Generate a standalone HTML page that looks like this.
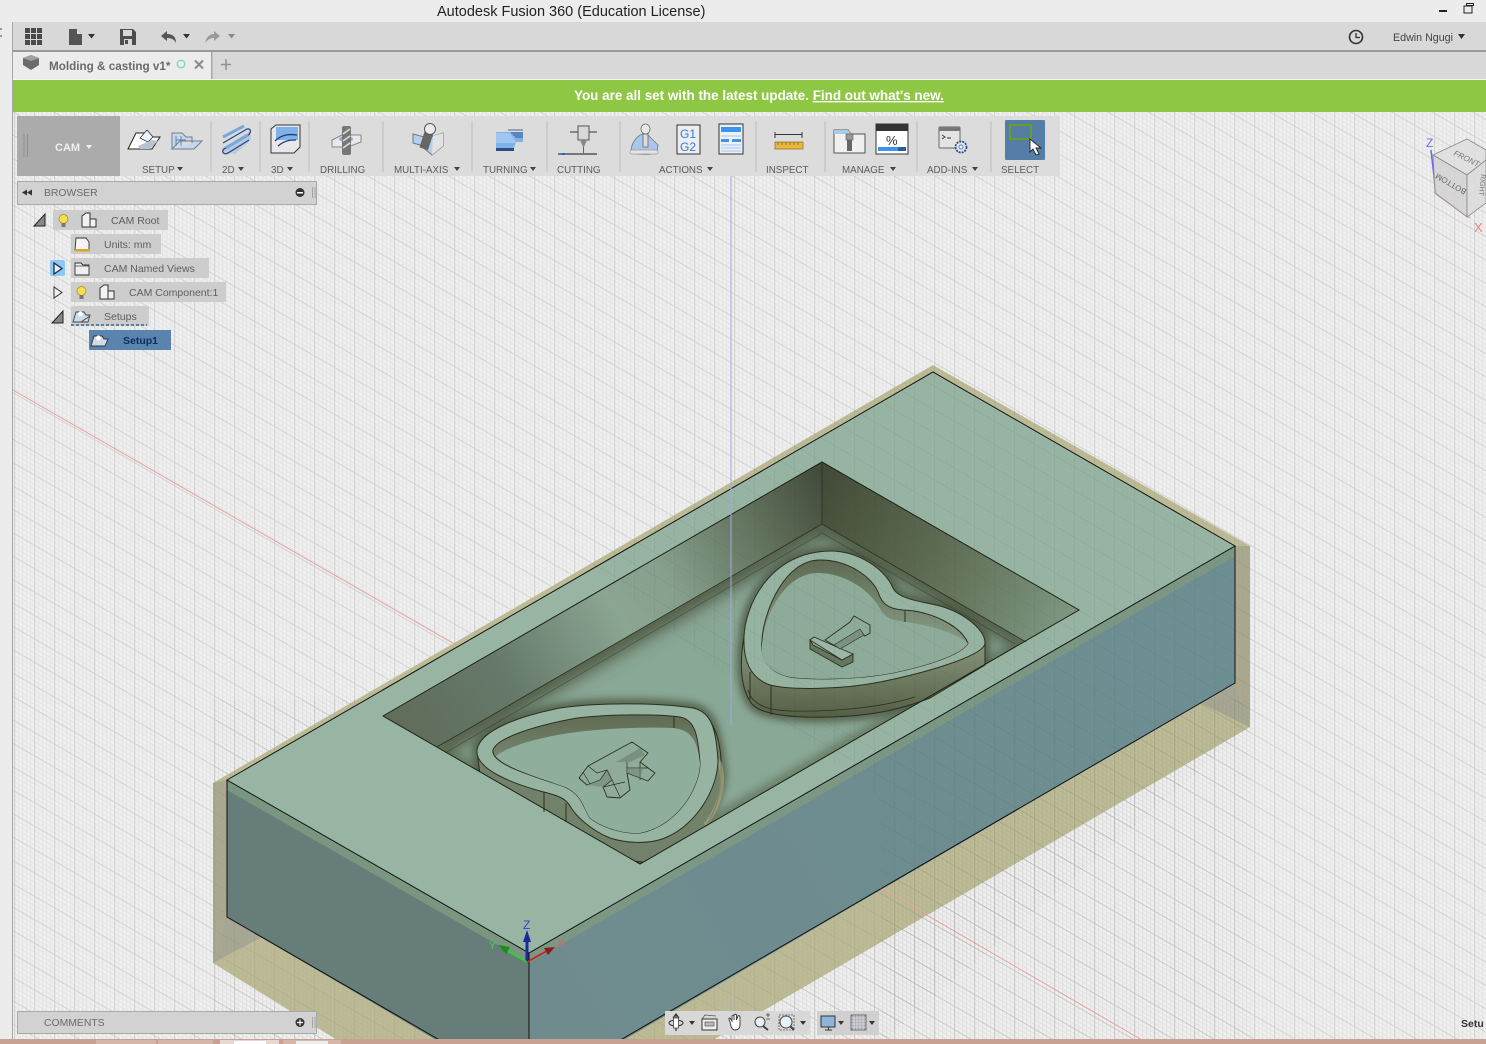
<!DOCTYPE html>
<html><head><meta charset="utf-8"><style>
html,body{margin:0;padding:0;background:#ececec;overflow:hidden}
svg{display:block;font-family:"Liberation Sans",sans-serif}
</style></head><body>
<svg width="1486" height="1044" viewBox="0 0 1486 1044" xmlns="http://www.w3.org/2000/svg">
<defs>
<pattern id="grid" width="20" height="23.4" patternUnits="userSpaceOnUse" patternTransform="skewY(30) translate(4.6,-1.1)">
<path d="M2 0V23.4M6 0V23.4M14 0V23.4M18 0V23.4M0 2.34H20M0 7.02H20M0 16.38H20M0 21.06H20" stroke="#e4e4e4" stroke-width="1" fill="none"/>
<path d="M10 0V23.4M0 11.7H20" stroke="#cdcdcd" stroke-width="1" fill="none"/>
</pattern>
<pattern id="gridm" width="20" height="23.4" patternUnits="userSpaceOnUse" patternTransform="skewY(30) translate(4.6,-1.1)">
<path d="M2 0V23.4M6 0V23.4M14 0V23.4M18 0V23.4M0 2.34H20M0 7.02H20M0 16.38H20M0 21.06H20" stroke="#3c4a40" stroke-opacity=".25" stroke-width="1" fill="none"/>
<path d="M10 0V23.4M0 11.7H20" stroke="#2c3a30" stroke-opacity=".7" stroke-width="1" fill="none"/>
</pattern>
<linearGradient id="wl" x1="383" y1="716" x2="822" y2="462" gradientUnits="userSpaceOnUse">
<stop offset="0" stop-color="#5f6c58"/><stop offset=".25" stop-color="#66796a"/><stop offset=".5" stop-color="#8aa592"/><stop offset=".62" stop-color="#87a18d"/><stop offset=".85" stop-color="#5d6c57"/><stop offset="1" stop-color="#41493a"/>
</linearGradient>
<linearGradient id="wr" x1="822" y1="462" x2="1079" y2="610" gradientUnits="userSpaceOnUse">
<stop offset="0" stop-color="#414936"/><stop offset=".5" stop-color="#5f6d55"/><stop offset="1" stop-color="#7f9882"/>
</linearGradient>
<linearGradient id="rf" x1="529" y1="1000" x2="1235" y2="600" gradientUnits="userSpaceOnUse">
<stop offset="0" stop-color="#6f8b8d"/><stop offset="1" stop-color="#6d8f94"/>
</linearGradient>
<linearGradient id="hw" x1="0" y1="0" x2="0" y2="1">
<stop offset="0" stop-color="#5f6b52"/><stop offset=".5" stop-color="#7e9079"/><stop offset="1" stop-color="#8fa996"/>
</linearGradient>
<linearGradient id="hb" x1="0" y1="0" x2="0" y2="1">
<stop offset="0" stop-color="#8a9b80"/><stop offset="1" stop-color="#565f45"/>
</linearGradient>
<filter id="b6" x="-20%" y="-20%" width="140%" height="140%"><feGaussianBlur stdDeviation="9"/></filter>
<filter id="b3" x="-20%" y="-20%" width="140%" height="140%"><feGaussianBlur stdDeviation="4"/></filter>
<clipPath id="cav"><polygon points="383,716 822,462 1079,610 640,864"/></clipPath>
<clipPath id="gm"><polygon points="590,565 933,365 1250,546 1250,727 880,1044 880,800"/></clipPath>
</defs>

<!-- background -->
<rect width="1486" height="1044" fill="#efefef"/>
<rect x="13" y="112" width="1473" height="930" fill="url(#grid)"/>
<path d="M13 390L470 653" stroke="#e8a0a0" stroke-width="1"/>

<!-- stock -->
<polygon points="213,783 933,365 1250,546 1250,727 713,1040 337,1040 213,963" fill="#b8b68e" fill-opacity=".92"/>
<polygon points="213,783 227,780 227,917 213,963" fill="#aaa98f"/>
<polygon points="213,963 227,917 262,937" fill="#a7a794"/>
<polygon points="1235,546 1250,546 1250,727 1235,683" fill="#aaa98f"/>
<polygon points="1250,727 1235,683 1200,703" fill="#a7a794"/>
<rect x="213" y="700" width="1037" height="344" fill="url(#gridm)" opacity=".1"/>

<!-- body -->
<polygon points="227,780 529,953 529,1044 443,1044 227,917" fill="#667d79"/>
<polygon points="529,953 1235,546 1235,683 617,1044 529,1044" fill="url(#rf)"/>
<polygon points="227,780 529,953 529,963 227,790" fill="#7a9580"/>
<polygon points="529,953 1235,546 1235,556 529,963" fill="#7c9884"/>
<polygon points="227,780 933,372 1235,546 529,953" fill="#98b5a4"/>
<path d="M880 888L1142 1040" stroke="#e8a0a0" stroke-width="1"/>

<!-- cavity -->
<polygon points="383,716 822,462 1079,610 640,864" fill="#8aa896"/>
<g clip-path="url(#cav)">
<path d="M437,747L822,524L1026,642" fill="none" stroke="#465039" stroke-width="20" filter="url(#b6)"/>
<path d="M822,524L822,530" stroke="#2c3020" stroke-width="40" filter="url(#b6)"/>
<path d="M437,747L640,864L1026,642" fill="none" stroke="#4a5238" stroke-width="14" filter="url(#b3)" opacity=".45"/>
<polygon points="383,716 822,462 822,524 437,747" fill="url(#wl)"/>
<polygon points="822,462 1079,610 1026,642 822,524" fill="url(#wr)"/>
<path d="M744,637 C745,605 770,552 830,551 C860,551 885,570 893,588 C899,600 925,602 940,606 C965,613 985,630 985,643 L985,665 L930,698 C900,710 870,716 830,717 C800,718 762,716 752,704 C742,690 740,665 744,637Z" fill="none" stroke="#45503a" stroke-width="9" filter="url(#b3)" opacity=".85"/>
<path d="M477,750 C480,730 520,716 560,708 C600,702 660,703 693,708 C712,712 716,730 721,770 C722,800 700,830 670,850 L640,866 L560,820 L480,775Z" fill="none" stroke="#45503a" stroke-width="10" filter="url(#b3)" opacity=".8"/>
</g>

<!-- heart 1 -->
<path d="M744,637 C739,665 741,690 752,704 C762,716 800,718 830,717 C870,716 900,710 930,698 L985,665 L985,643 L744,637Z" fill="url(#hb)" stroke="#2c2f1e" stroke-width="1"/>
<path d="M748,690 C752,704 765,710 790,711 C830,712 880,708 915,697" fill="none" stroke="#2c2f1e" stroke-width=".8"/>
<path d="M771 685V715M750 672V700" stroke="#2c2f1e" stroke-width="1" fill="none"/>
<path d="M744,637 C745,605 770,552 830,551 C860,551 885,570 893,588 C899,600 925,602 940,606 C965,613 985,630 985,643 C985,655 930,672 880,682 C840,690 790,690 770,685 C750,678 743,660 744,637Z" fill="#97b4a3" stroke="#2c2f1e" stroke-width="1"/>
<path d="M762,640 C764,610 785,560 820,560 C850,560 872,578 878,592 C882,605 890,609 903,610 C930,611 960,625 968,643 C962,655 925,666 897,672 C860,680 810,680 790,677 C770,673 760,660 762,640Z" fill="url(#hw)" stroke="#2c2f1e" stroke-width="1"/>
<path d="M762,645 C764,615 785,573 818,573 C845,573 868,590 878,605 C884,618 892,620 905,622 C930,625 955,633 968,643 C962,655 925,666 897,672 C860,680 810,680 790,677 C770,673 760,660 762,645Z" fill="#8fac9b"/>
<path d="M905 610V622" stroke="#2c2f1e" stroke-width="1"/>
<!-- letter I -->
<polygon points="810,640 810,649 842,667 853,662 853,654 842,660 813,645" fill="#65785f" stroke="#2c2f1e" stroke-width=".9"/>
<polygon points="810,640 814,637 853,654 842,660" fill="#9cb8a7" stroke="#2c2f1e" stroke-width=".9"/>
<polygon points="825,640 850,622 854,616 870,625 870,633 865,636 860,630 837,647" fill="#8fac9b" stroke="#2c2f1e" stroke-width=".9"/>
<polygon points="834,645 860,629 864,635 840,649" fill="#7d9282" stroke="#2c2f1e" stroke-width=".6"/>

<!-- heart 2 -->
<g clip-path="url(#cav)">
<path d="M477,750 L480,775 C515,800 555,815 570,830 C590,850 625,867 667,861 C695,849 722,815 721,770 C722,740 712,712 693,708Z" fill="#72826a" stroke="#2c2f1e" stroke-width="1"/>
</g>
<path d="M544 792V812M566 803V822" stroke="#2c2f1e" stroke-width="1" fill="none"/>
<path d="M718 760C726 775 722 805 705 825" fill="none" stroke="#a5a47f" stroke-width="4" opacity=".7"/>
<path d="M477,750 C480,730 520,716 560,708 C600,702 660,703 693,708 C712,712 716,730 718,760 C718,790 695,825 667,837 C650,845 625,843 610,838 C590,830 575,815 570,806 C565,797 555,795 540,791 C515,784 475,770 477,750Z" fill="#97b4a3" stroke="#2c2f1e" stroke-width="1"/>
<path d="M493,750 C497,738 533,726 577,718 C610,714 660,714 680,717 C695,720 698,735 700,763 C700,785 680,825 640,833 C620,834 600,826 590,818 C583,808 583,795 565,787 C540,778 490,765 493,750Z" fill="url(#hw)" stroke="#2c2f1e" stroke-width="1"/>
<path d="M496,756 C510,745 545,736 577,732 C610,728 650,727 673,728 C690,730 697,738 700,763 C700,785 680,825 640,833 C620,834 600,826 590,818 C583,808 583,795 565,787 C540,778 505,768 496,756Z" fill="#90ae9c"/>
<path d="M674 716V728" stroke="#2c2f1e"/>
<!-- letter K -->
<polygon points="588,766 632,742 648,753 640,762 655,773 648,781 627,773 630,790 620,798 607,797 603,787 612,780 607,770 600,780 587,785 579,778" fill="#8fac9b" stroke="#2c2f1e" stroke-width=".9" stroke-linejoin="round"/>
<polygon points="616,762 640,748 645,755 630,762" fill="#6f8470" opacity=".7"/>
<path d="M583 772L590 784M588 766L597 773L607 770M612 780L620 797M627 762L627 773M640 762V780M627 768H648M603 787L625 782" stroke="#2c2f1e" stroke-width=".7" fill="none"/>
<polygon points="607,770 612,780 603,787 587,785 600,780" fill="#6f8470" opacity=".55"/>
<polygon points="627,768 643,768 640,778 627,773" fill="#6f8470" opacity=".55"/>

<!-- cavity edges -->
<polygon points="383,716 822,462 1079,610 640,864" fill="none" stroke="#1c1f14" stroke-width="1"/>
<path d="M822 462V524M437 747L822 524L1026 642" fill="none" stroke="#2c2f1e" stroke-width=".8"/>
<path d="M445 753L822 533L1015 644" fill="none" stroke="#2c2f1e" stroke-width=".6" opacity=".6"/>

<!-- grid through model -->
<g clip-path="url(#gm)" opacity=".12"><rect x="590" y="360" width="660" height="684" fill="url(#gridm)"/></g>

<!-- body edges -->
<polygon points="227,780 933,372 1235,546 529,953" fill="none" stroke="#111" stroke-width="1"/>
<path d="M227 780V917L443 1042M529 953V1044M617 1042L1235 683V546" fill="none" stroke="#111" stroke-width="1"/>

<path d="M731 176V726M731 1000V1040" stroke="#a8a8dc" stroke-width="1"/>

<!-- origin triad -->
<path d="M527 962V938" stroke="#1a2a9a" stroke-width="3"/><polygon points="527,930 523,942 531,942" fill="#1a2a9a"/>
<path d="M527 962L500 947" stroke="#22dd22" stroke-width="1.6"/><polygon points="498,945 510,947 506,954" fill="#1c8c1c"/>
<path d="M527 962L552 948" stroke="#cc2020" stroke-width="1.8"/><polygon points="555,947 544,948 548,955" fill="#8c1c1c"/>
<text x="523" y="929" font-size="12" fill="#3344cc">Z</text>
<text x="489" y="949" font-size="10" fill="#33dd33">Y</text>
<text x="557" y="947" font-size="11" fill="#e06060">X</text>

<!-- chrome -->
<rect x="0" y="0" width="12" height="1044" fill="#ececec"/>
<rect x="12" y="22" width="1" height="1020" fill="#a6a6a6"/>
<rect x="0" y="28" width="2" height="2" fill="#999"/><rect x="0" y="35" width="2" height="2" fill="#999"/>
<rect y="0" width="1486" height="22" fill="#ececec"/>
<text x="437" y="16" font-size="14.5" fill="#222">Autodesk Fusion 360 (Education License)</text>
<rect x="1439" y="10" width="8" height="2" fill="#222"/>
<rect x="1464" y="6" width="8" height="7" fill="#ececec" stroke="#222"/><rect x="1466.5" y="3.5" width="7" height="2" fill="none" stroke="#222"/>
<rect x="13" y="22" width="1473" height="28" fill="#d8d8d8"/>
<rect x="13" y="50" width="1473" height="2" fill="#9a9a9a"/>
<rect x="13" y="52" width="1473" height="27" fill="#d8d8d8"/>
<rect x="13" y="79" width="1473" height="1" fill="#f4f4f4"/>

<g fill="#4a4a4a"><rect x="25" y="28" width="5" height="5"/><rect x="31" y="28" width="5" height="5"/><rect x="37" y="28" width="5" height="5"/><rect x="25" y="34" width="5" height="5"/><rect x="31" y="34" width="5" height="5"/><rect x="37" y="34" width="5" height="5"/><rect x="25" y="40" width="5" height="5"/><rect x="31" y="40" width="5" height="5"/><rect x="37" y="40" width="5" height="5"/></g>
<path d="M69 29H77L82 34V45H69Z" fill="#555"/><path d="M77 29V34H82" fill="#ddd"/>
<polygon points="88,34 95,34 91.5,38.5" fill="#333"/>
<path d="M120 29H133L136 32V45H120Z" fill="#4d4d4d"/><rect x="123" y="30" width="9" height="6" fill="#d8d8d8"/><rect x="124" y="39" width="8" height="6" fill="#d8d8d8"/><rect x="125" y="40" width="3" height="4" fill="#4d4d4d"/>
<path d="M161 36L167 31V34C173 34 176 37 176 43C174 39 171 38 167 38V41Z" fill="#555"/>
<polygon points="183,34 190,34 186.5,38.5" fill="#333"/>
<path d="M220 36L214 31V34C209 34 206 38 205 43C208 39 211 38 214 38V41Z" fill="#9a9a9a"/>
<polygon points="228,34 235,34 231.5,38.5" fill="#888"/>
<circle cx="1356" cy="37" r="6.5" fill="none" stroke="#333" stroke-width="1.6"/><path d="M1356 33V37.5H1360" fill="none" stroke="#333" stroke-width="1.3"/>
<text x="1393" y="41" font-size="10.7" fill="#444">Edwin Ngugi</text>
<polygon points="1458,34 1465,34 1461.5,39" fill="#333"/>

<!-- tab -->
<rect x="13" y="52" width="198" height="27" fill="#ececec"/>
<rect x="211" y="52" width="1.5" height="27" fill="#a8a8a8"/>
<polygon points="23,58 31,55 39,58 39,65 31,70 23,65" fill="#6b6b6b"/><polygon points="23,58 31,61 39,58 31,55" fill="#a0a0a0"/>
<text x="49" y="70" font-size="11.7" font-weight="bold" fill="#6a6a6a">Molding &amp; casting v1*</text>
<circle cx="181" cy="64" r="3.8" fill="none" stroke="#7fd0b8" stroke-width="1.2"/>
<path d="M195 60.5L203 68.5M203 60.5L195 68.5" stroke="#8a8a8a" stroke-width="2"/>
<path d="M226 59V70M221 64.5H231" stroke="#8f8f8f" stroke-width="1.5"/>

<!-- green banner -->
<rect x="13" y="80" width="1473" height="32" fill="#8dc743"/>
<text x="574" y="100" font-size="13.44" font-weight="bold" fill="#fff">You are all set with the latest update. <tspan text-decoration="underline">Find out what's new.</tspan></text>

<!-- toolbar -->
<rect x="17" y="116" width="1043" height="60" fill="#dcdcdc"/>
<rect x="17" y="116" width="103" height="60" fill="#ababab"/>
<path d="M24 134V157M27.5 134V157" stroke="#8f8f8f" stroke-width="1"/>
<text x="55" y="151" font-size="11" font-weight="bold" fill="#f0f0f0">CAM</text>
<polygon points="86,145 92,145 89,149" fill="#f0f0f0"/>
<path d="M211 121V172M260 121V172M309 121V172M383 121V172M472 121V172M547 121V172M620 121V172M756 121V172M825 121V172M917 121V172M991 121V172" stroke="#c8c8c8" stroke-width="1.5"/>
<g font-size="9.8" fill="#5b5b5b">
<text x="142" y="173">SETUP</text><text x="222" y="173">2D</text><text x="271" y="173">3D</text><text x="320" y="173">DRILLING</text><text x="394" y="173">MULTI-AXIS</text><text x="483" y="173">TURNING</text><text x="557" y="173">CUTTING</text><text x="659" y="173">ACTIONS</text><text x="766" y="173">INSPECT</text><text x="842" y="173">MANAGE</text><text x="927" y="173">ADD-INS</text><text x="1001" y="173">SELECT</text>
</g>
<g fill="#444">
<polygon points="177,167 183,167 180,171"/><polygon points="238,167 244,167 241,171"/><polygon points="287,167 293,167 290,171"/><polygon points="454,167 460,167 457,171"/><polygon points="530,167 536,167 533,171"/><polygon points="707,167 713,167 710,171"/><polygon points="890,167 896,167 893,171"/><polygon points="972,167 978,167 975,171"/>
</g>
<!-- setup icons -->
<path d="M128 149L136 133H146L150 137H160L152 149Z" fill="#fff" stroke="#222" stroke-width="1"/>
<path d="M140 138L147 130L153 137L148 142Z" fill="#eef3fb" stroke="#333" stroke-width=".8"/>
<path d="M138 146L152 140L158 141L150 149H140Z" fill="#b7c3cf"/>
<path d="M172 149V133H182L186 137H192V143M172 149H194L202 141H180Z" fill="#c8d8ea" stroke="#6c7f92" stroke-width="1"/>
<path d="M176 140H186M176 136V146M181 136V146" stroke="#5c82b0" stroke-width="1"/>
<!-- 2D -->
<polygon points="222,148 250,131 251,140 235,154 224,152" fill="#b9c9de"/>
<path d="M223 143L247 129C252 128 251 134 247 136L224 149C221 152 224 155 228 153L249 140" fill="none" stroke="#2c4a86" stroke-width="1.3"/>
<path d="M223 137L244 126" stroke="#7aa7dc" stroke-width="3"/><path d="M226 148L248 135" stroke="#7aa7dc" stroke-width="3"/>
<!-- 3D -->
<path d="M271 129L276 125H300V147L294 153H271Z" fill="#e8e8e8" stroke="#333" stroke-width="1"/>
<rect x="276" y="127" width="22" height="13" fill="#7fb2e8"/>
<path d="M275 141C282 134 290 134 297 135M278 146C285 140 291 140 296 140" fill="none" stroke="#1c3c80" stroke-width="1.3"/>
<!-- drilling -->
<polygon points="332,140 342,135 361,135 361,142 348,147 332,147" fill="#e8e8e8" stroke="#888" stroke-width="1"/>
<ellipse cx="346" cy="139" rx="7" ry="3" fill="#7fb2e8"/>
<rect x="342" y="126" width="9" height="29" rx="2" fill="#777"/>
<path d="M343 134L350 129M343 141L350 136M343 148L350 143" stroke="#ddd" stroke-width="1.5"/>
<!-- multi-axis -->
<polygon points="413,134 428,138 443,133 443,146 432,155 420,145 413,143" fill="#b4cff0" stroke="#777" stroke-width="1"/>
<polygon points="433,136 443,133 443,146 432,155" fill="#e2e2e2"/>
<rect x="422" y="131" width="9" height="18" fill="#666" transform="rotate(18 426 140)"/>
<circle cx="430" cy="129" r="5.5" fill="#ececec" stroke="#555"/>
<!-- turning -->
<polygon points="496,132 523,132 523,142 516,142 514,148 496,148" fill="#7fb2e8"/>
<polygon points="496,133 510,133 516,142 516,143 496,143" fill="#a9ccf3" opacity=".8"/>
<path d="M508 130H523M511 133H523M513 135H523M515 137H523" stroke="#1d3c72" stroke-width=".8"/>
<rect x="496" y="148" width="18" height="3" fill="#2b4d86"/>
<!-- cutting -->
<path d="M570 132H597" stroke="#333" stroke-width="1"/>
<rect x="578" y="126" width="11" height="14" fill="#d8d8d8" stroke="#555"/>
<polygon points="580,140 587,140 584,147 583,147" fill="#888"/>
<path d="M583.5 147V153" stroke="#d33" stroke-width="1"/>
<rect x="558" y="153" width="26" height="2" fill="#777"/><rect x="584" y="153" width="13" height="2" fill="#777"/><rect x="562" y="153" width="3" height="2" fill="#1c6cc8"/>
<!-- actions -->
<path d="M631 152C631 142 638 134 646 133L658 145L657 153C650 155 636 155 631 152Z" fill="#a9c7ea" stroke="#777" stroke-width=".8"/>
<rect x="643" y="134" width="5" height="13" fill="#ddd" stroke="#666" stroke-width=".8"/>
<ellipse cx="645.5" cy="129" rx="4.5" ry="5" fill="#e8e8e8" stroke="#666" stroke-width=".8"/>
<rect x="630" y="150" width="28" height="4" rx="2" fill="#e4e4e4" stroke="#999" stroke-width=".7"/>
<rect x="677" y="125" width="23" height="29" fill="#eee" stroke="#333" stroke-width="1"/>
<text x="680" y="138" font-size="12" fill="#2a7fe0">G1</text><text x="680" y="151" font-size="12" fill="#2a7fe0">G2</text>
<rect x="719" y="124" width="24" height="30" fill="#eef1f4" stroke="#333" stroke-width="1"/>
<rect x="721" y="127" width="20" height="5" fill="#3d94ef"/><rect x="721" y="139" width="8" height="3" fill="#3d94ef"/><rect x="732" y="139" width="9" height="3" fill="#3d94ef"/>
<path d="M721 136H741M721 145H741M721 148H741M721 151H741" stroke="#9cc8f4" stroke-width="1"/>
<!-- inspect -->
<path d="M775 134.5H802M775 132V138M802 132V138" stroke="#333" stroke-width="1" fill="none"/>
<rect x="775" y="142" width="28" height="7" fill="#e8b83c" stroke="#8a6a20" stroke-width=".7"/>
<path d="M778 142V145M782 142V145M786 142V145M790 142V145M794 142V145M798 142V145" stroke="#7a5a10" stroke-width=".7"/>
<!-- manage -->
<path d="M834 130H848L851 134H865V153H834Z" fill="#f0f0f0" stroke="#555" stroke-width="1"/>
<path d="M834 130H848L851 134H834Z" fill="#aacbe8"/>
<rect x="846" y="134" width="7" height="6" fill="#999" stroke="#555" stroke-width=".6"/><rect x="847" y="140" width="5" height="11" fill="#666"/>
<rect x="876" y="124" width="32" height="30" fill="#fff" stroke="#333" stroke-width="1"/><rect x="876" y="124" width="32" height="7" fill="#333"/>
<text x="886" y="145" font-size="13" fill="#333">%</text>
<rect x="878" y="147" width="20" height="4" fill="#3d94ef"/><rect x="898" y="147" width="8" height="4" fill="#2a5f96"/>
<!-- add-ins -->
<rect x="939" y="127" width="21" height="21" rx="1" fill="#e4e4e4" stroke="#666" stroke-width="1"/><rect x="939" y="127" width="21" height="4" fill="#777"/>
<path d="M942 135L945 137L942 139M947 138H951" stroke="#333" stroke-width=".9" fill="none"/>
<circle cx="961" cy="147" r="5.5" fill="#dce6f2" stroke="#2b4d86" stroke-width="1.8" stroke-dasharray="2 1"/><circle cx="961" cy="147" r="2" fill="#fff" stroke="#2b4d86" stroke-width=".7"/>
<!-- select -->
<rect x="1005" y="120" width="40" height="40" rx="1" fill="#557ea6"/>
<rect x="1010" y="125" width="21" height="14" fill="none" stroke="#6fa018" stroke-width="1.8"/>
<path d="M1030 139V152L1033 149L1036 155L1039 154L1036 148H1041Z" fill="#fff" stroke="#222" stroke-width=".9"/>

<!-- browser panel -->
<rect x="17.5" y="181.5" width="299" height="23" fill="#d2d2d2" stroke="#a8a8a8"/>
<path d="M22 192.5L27 189.5V195.5ZM27 192.5L32 189.5V195.5Z" fill="#333"/>
<text x="44" y="196" font-size="10.4" fill="#6a6a6a">BROWSER</text>
<circle cx="300" cy="192.5" r="4.5" fill="#333"/><rect x="297" y="192" width="6" height="1.5" fill="#fff"/>
<path d="M312.5 187V198M315 187V198" stroke="#999" stroke-width=".8"/>

<!-- tree -->
<g fill="#cdcdcd"><rect x="53" y="210" width="115" height="20"/><rect x="71" y="234" width="90" height="20"/><rect x="71" y="258" width="138" height="20"/><rect x="71" y="282" width="155" height="20"/><rect x="71" y="306" width="78" height="20"/></g>
<rect x="89" y="330" width="82" height="20" fill="#5a84ad"/>
<g font-size="10.5" fill="#5e5e5e"><text x="111" y="224">CAM Root</text><text x="104" y="248">Units: mm</text><text x="104" y="272">CAM Named Views</text><text x="129" y="296">CAM Component:1</text><text x="104" y="320">Setups</text></g>
<text x="123" y="344" font-size="10.5" font-weight="bold" fill="#0f2c66">Setup1</text>
<path d="M71 325H147" stroke="#5a7f9f" stroke-width="2" stroke-dasharray="3 2"/>
<polygon points="45,214 45,226 34,226" fill="#888" stroke="#222" stroke-width="1"/>
<polygon points="63,311 63,323 52,323" fill="#888" stroke="#222" stroke-width="1"/>
<rect x="50" y="260" width="15" height="16" rx="2" fill="#8cc8f4"/>
<polygon points="54,263 54,274 62,268.5" fill="#f0f0f0" stroke="#1c2c50" stroke-width="1.3"/>
<polygon points="54,287 54,298 62,292.5" fill="#f0f0f0" stroke="#333" stroke-width="1"/>
<circle cx="63.5" cy="219" r="4.5" fill="#f6de4e" stroke="#a08a20" stroke-width=".7"/><rect x="61.5" y="223" width="4" height="4" fill="#777"/>
<circle cx="81.5" cy="291" r="4.5" fill="#f6de4e" stroke="#a08a20" stroke-width=".7"/><rect x="79.5" y="295" width="4" height="4" fill="#777"/>
<path d="M82 227V216L86 213H90V219H96V227Z" fill="#f2f2f2" stroke="#333" stroke-width="1"/><path d="M90 219V227" stroke="#333"/>
<path d="M100 299V288L104 285H108V291H114V299Z" fill="#f2f2f2" stroke="#333" stroke-width="1"/><path d="M108 291V299" stroke="#333"/>
<path d="M76 238H86L89 242V250H75Z" fill="#f4f4f4" stroke="#333" stroke-width=".9"/><rect x="75" y="249" width="15" height="2.5" fill="#d8a820"/>
<path d="M75 263H81L83 265H89V275H75Z" fill="#efefef" stroke="#333" stroke-width=".9"/><path d="M75 266H89" stroke="#333" stroke-width=".7"/>
<path d="M73 322L76 312H84L86 315H90L88 322Z" fill="#cfdce8" stroke="#444" stroke-width=".9"/><circle cx="80.5" cy="314" r="2.5" fill="#fff"/><path d="M81 322L90 316" stroke="#444"/>
<path d="M91 346L94 336H102L104 339H108L105 346Z" fill="#cfdce8" stroke="#333" stroke-width=".9"/><circle cx="98.5" cy="338" r="2.5" fill="#fff"/>

<!-- viewcube -->
<path d="M1431 150L1436 194" stroke="#6a6ae8" stroke-width="1.5"/>
<path d="M1436 194L1470 218" stroke="#f0a0a0" stroke-width="1.5"/>
<polygon points="1433,155 1467,139 1486,150 1486,160 1467,175" fill="#dedede" fill-opacity=".85" stroke="#8a8a8a" stroke-width=".8"/>
<polygon points="1433,155 1467,175 1467,217 1435,193" fill="#d2d2d2" fill-opacity=".85" stroke="#8a8a8a" stroke-width=".8"/>
<polygon points="1467,175 1486,160 1486,203 1467,217" fill="#dadada" fill-opacity=".85" stroke="#8a8a8a" stroke-width=".8"/>
<text font-size="8" fill="#777" font-style="italic" transform="translate(1453,155) rotate(26)">FRONT</text>
<text font-size="8" fill="#666" transform="translate(1467,190) rotate(210)">BOTTOM</text>
<text font-size="7" fill="#777" transform="translate(1481,174) rotate(95)">RIGHT</text>
<text x="1426" y="147" font-size="12" fill="#7070ee">Z</text>
<text x="1474" y="232" font-size="13" fill="#f08080">X</text>

<!-- comments panel -->
<rect x="17.5" y="1011.5" width="299" height="22" fill="#d2d2d2" stroke="#a8a8a8"/>
<text x="44" y="1026" font-size="10.4" fill="#6a6a6a">COMMENTS</text>
<circle cx="300" cy="1022.5" r="4.5" fill="#333"/><path d="M297 1022.5H303M300 1019.5V1025.5" stroke="#fff" stroke-width="1.2"/>
<path d="M312.5 1017V1028M315 1017V1028" stroke="#999" stroke-width=".8"/>

<!-- nav bar -->
<rect x="665" y="1011" width="145" height="24" fill="#d8d8d8"/>
<rect x="817" y="1011" width="62" height="24" fill="#d0d0d0"/>
<path d="M676 1015V1031M673 1018L676 1014L679 1018" stroke="#333" stroke-width="1.2" fill="none"/><ellipse cx="676" cy="1023" rx="7" ry="3" fill="none" stroke="#333" stroke-width="1"/><rect x="673.5" y="1018" width="5" height="10" fill="#fff" stroke="#333" stroke-width=".7"/>
<polygon points="689,1021 695,1021 692,1025" fill="#333"/>
<rect x="702" y="1019" width="15" height="11" fill="#eee" stroke="#333" stroke-width="1"/><rect x="705" y="1022" width="9" height="4" fill="#bbb" stroke="#444" stroke-width=".6"/><path d="M702 1019L705 1015L716 1016" fill="none" stroke="#555" stroke-width=".8"/>
<path d="M730 1022C729 1019 728 1018 730 1018L732 1021V1016C733 1015 734 1015 734 1016V1020V1015C735 1014 736 1014 736.5 1015V1020L738 1016C739 1015 740 1016 740 1017V1025C740 1029 737 1030 735 1030C732 1030 731 1027 730 1022Z" fill="#fff" stroke="#333" stroke-width=".9"/>
<circle cx="760" cy="1022" r="5" fill="#e8f0f8" stroke="#444" stroke-width="1"/><path d="M763 1026L768 1030" stroke="#444" stroke-width="2"/><path d="M766 1015H770M768 1013V1017M766 1019H770" stroke="#444" stroke-width=".8"/>
<rect x="779" y="1015" width="15" height="15" fill="none" stroke="#555" stroke-width=".8" stroke-dasharray="2 1"/><circle cx="786" cy="1022" r="6" fill="#e8f0f8" stroke="#444" stroke-width="1"/><path d="M790 1026L794 1030" stroke="#444" stroke-width="2"/>
<polygon points="800,1021 806,1021 803,1025" fill="#333"/>
<rect x="821" y="1016" width="14" height="11" fill="#8fb4dc" stroke="#333" stroke-width="1"/><path d="M825 1030H832M828.5 1027V1030" stroke="#333" stroke-width="1"/>
<polygon points="838,1021 844,1021 841,1025" fill="#333"/>
<rect x="851" y="1015" width="15" height="15" fill="#a8a8b8" stroke="#555" stroke-width=".8"/><path d="M854 1015V1030M857 1015V1030M860 1015V1030M863 1015V1030M851 1018H866M851 1021H866M851 1024H866M851 1027H866" stroke="#eee" stroke-width=".6"/>
<polygon points="869,1021 875,1021 872,1025" fill="#333"/>

<text x="1461" y="1027" font-size="10.5" font-weight="bold" fill="#333">Setu</text>

<!-- bottom strip -->
<rect y="1039" width="1486" height="5" fill="#c8a192"/>
<g fill="#d6b6a8"><rect x="96" y="1040" width="60" height="4"/><rect x="158" y="1040" width="55" height="4"/></g>
<rect x="220" y="1040" width="59" height="4" fill="#e8d8d0"/><rect x="234" y="1041" width="32" height="3" fill="#fff"/>
<rect x="283" y="1040" width="58" height="4" fill="#d6b6a8"/><rect x="296" y="1041" width="32" height="3" fill="#eee"/>
</svg>
</body></html>
